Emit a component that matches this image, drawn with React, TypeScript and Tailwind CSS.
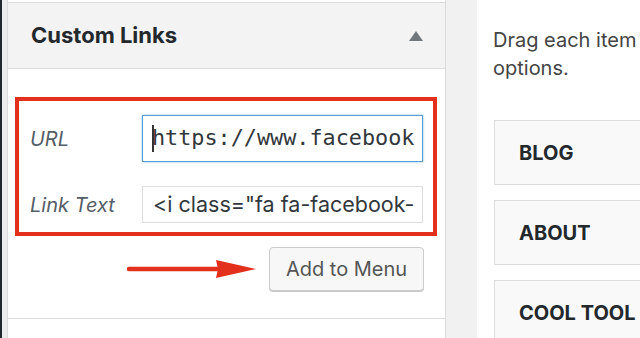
const sans = "font-['Inter','Liberation_Sans',sans-serif]";

const MenuItem = ({ label }: { label: string }) => (
  <div className="h-[65px] w-[200px] shrink-0 border border-[#dcdcdc] bg-[#f9f9f9] flex items-center pl-[24px]">
    <span className="text-[20px] font-bold text-[#23282d] whitespace-nowrap">{label}</span>
  </div>
);

const Arrow = () => (
  <svg width="131" height="20" viewBox="0 0 131 20">
    <line x1="2" y1="10" x2="92" y2="10" stroke="#e3301d" strokeWidth="4.5" strokeLinecap="round" />
    <polygon points="89,1 129,10 89,19 91,10" fill="#e3301d" />
  </svg>
);

export default function App() {
  return (
    <div className={`w-[640px] h-[338px] overflow-hidden flex bg-[#f1f1f1] ${sans}`}>
      <div className="w-[2px] shrink-0 bg-[#23282d]" />
      <div className="w-[5px] shrink-0 bg-[#ececec]" />

      {/* Custom Links box */}
      <div className="w-[439px] shrink-0 flex flex-col bg-white border-x border-[#dcdcdc]">
        <div className="mt-[2px] h-[67px] border-y border-[#dcdcdc] bg-[#f3f3f3] flex items-center justify-between pl-[23px] pr-[22px]">
          <h3 className="text-[22px] font-bold text-[#23282d]">Custom Links</h3>
          <svg width="14" height="10" viewBox="0 0 14 10">
            <polygon points="7,0 14,10 0,10" fill="#72777c" />
          </svg>
        </div>

        <div className="px-[7px] pt-[28px]">
          <div className="w-[422px] h-[139px] border-4 border-[#e3301d] pt-[14px] pl-[11px] pr-[10px] flex flex-col gap-[24px]">
            <div className="flex items-center justify-between">
              <label className="italic text-[20px] text-[#555d66]">URL</label>
              <div className="w-[281px] h-[47px] border border-[#5b9dd9] shadow-[0_0_2px_rgba(30,140,190,0.6)] flex items-center pl-[9px] overflow-hidden">
                <span className="w-[2px] h-[27px] bg-[#333] -mr-[2px] shrink-0" />
                <span className="font-['DejaVu_Sans_Mono',monospace] text-[21.8px] text-[#32373c] whitespace-nowrap">
                  https://www.facebook
                </span>
              </div>
            </div>
            <div className="flex items-center justify-between">
              <label className="italic text-[20px] text-[#555d66]">Link Text</label>
              <div className="w-[281px] h-[37px] border border-[#dedede] flex items-center pl-[10px] overflow-hidden">
                <span className="text-[21.5px] text-[#32373c] whitespace-nowrap">
                  &lt;i class="fa fa-facebook-
                </span>
              </div>
            </div>
          </div>

          <div className="mt-[11px] flex items-center justify-end gap-[11px] pr-[14px]">
            <Arrow />
            <button className="w-[155px] h-[44px] rounded-[4px] border border-[#cccccc] bg-[#f7f7f7] shadow-[0_1px_0_#c8c8c8] text-[20px] text-[#555]">
              Add to Menu
            </button>
          </div>
        </div>

        <div className="mt-[27px] border-t border-[#dcdcdc] flex-1 bg-white" />
      </div>

      {/* Menu structure */}
      <div className="ml-[31px] flex-1 bg-white pl-[16px] pt-[26px] overflow-hidden">
        <div className="text-[20px] leading-[28px] text-[#444]">
          <div className="whitespace-nowrap">Drag each item</div>
          <div className="whitespace-nowrap">options.</div>
        </div>
        <div className="mt-[38px] ml-[1px] flex flex-col gap-[15px]">
          <MenuItem label="BLOG" />
          <MenuItem label="ABOUT" />
          <MenuItem label="COOL TOOL" />
        </div>
      </div>
    </div>
  );
}
